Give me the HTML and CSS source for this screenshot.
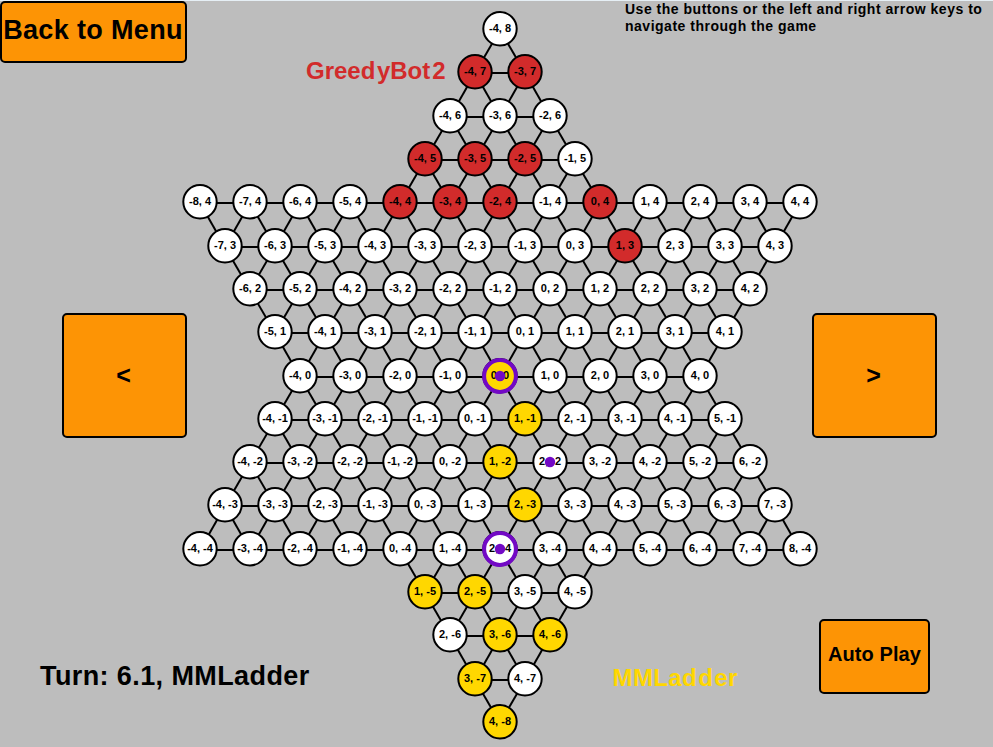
FILE: index.html
```html
<!DOCTYPE html>
<html lang="en">
<head>
<meta charset="utf-8">
<title>Game Replay</title>
<link rel="stylesheet" href="styles.css">
</head>
<body>
<main class="stage">
  <svg class="board" id="board" width="993" height="747" viewBox="0 0 993 747">
    <g id="edges" class="edges"></g>
    <g id="nodes"></g>
    <g id="trail"></g>
    <text class="player player-red" x="306" y="79">Greed<tspan dx="1.5">y</tspan>Bot<tspan dx="2">2</tspan></text>
    <text class="player player-gold" x="612.5" y="686">MMLad<tspan dx="1">d</tspan><tspan dx="1">e</tspan>r</text>
  </svg>
  <section class="side side-left">
    <button class="btn btn-menu">Back to Menu</button>
    <button class="btn btn-step btn-prev">&lt;</button>
    <p class="turn">Turn: 6.1, MMLadder</p>
  </section>
  <section class="side side-right">
    <p class="help">Use the buttons or the left and right arrow keys to<br>navigate through the game</p>
    <button class="btn btn-step btn-next">&gt;</button>
    <button class="btn btn-auto">Auto Play</button>
  </section>
</main>
<script src="board.js"></script>
</body>
</html>
```
FILE: board.js
```js
const NS = 'http://www.w3.org/2000/svg';
const RED = ['-4,7', '-3,7', '-4,5', '-3,5', '-2,5', '-4,4', '-3,4', '-2,4', '0,4', '1,3'];
const GOLD = ['0,0', '1,-1', '1,-2', '2,-3', '1,-5', '2,-5', '3,-6', '4,-6', '3,-7', '4,-8'];
const px = (q, r) => 500 + 50 * q + 25 * r;
const py = r => Math.floor(376 - 43.3 * r + 0.05);

function add(parent, tag, attrs, text) {
  const el = document.createElementNS(NS, tag);
  for (const k in attrs) el.setAttribute(k, attrs[k]);
  if (text) el.textContent = text;
  document.getElementById(parent).appendChild(el);
}

// A cell belongs to the star when it lies in either of its two large triangles.
function inStar(q, r) {
  const s = -q - r;
  return (q >= -4 && r >= -4 && s >= -4) || (q <= 4 && r <= 4 && s <= 4);
}

for (let r = 8; r >= -8; r--) {
  for (let q = -8; q <= 8; q++) {
    if (!inStar(q, r)) continue;
    const x = px(q, r), y = py(r), key = q + ',' + r;
    for (const [dq, dr] of [[1, 0], [0, -1], [1, -1]]) {
      if (inStar(q + dq, r + dr)) {
        add('edges', 'line', { x1: x, y1: y + 1, x2: px(q + dq, r + dr), y2: py(r + dr) + 1 });
      }
    }
    const owner = RED.includes(key) ? 'red' : GOLD.includes(key) ? 'gold' : 'empty';
    add('nodes', 'circle', { class: 'cell ' + owner, cx: x, cy: y - 0.2, r: 16.7 });
    add('nodes', 'text', { class: 'coord', x: x, y: y + 3 }, q + ', ' + r);
  }
}

for (const [q, r] of [[0, 0], [2, -4]]) {
  add('trail', 'circle', { class: 'ring', cx: px(q, r), cy: py(r), r: 15.9 });
}
for (const [q, r] of [[0, 0], [2, -2], [2, -4]]) {
  add('trail', 'circle', { class: 'dot', cx: px(q, r), cy: py(r), r: 5.2 });
}
```
FILE: styles.css
```css
* {
  box-sizing: border-box;
}

body {
  margin: 0;
  font-family: "Liberation Sans", Arial, sans-serif;
  font-weight: bold;
  color: #000;
}

.stage {
  position: relative;
  display: flex;
  justify-content: space-between;
  width: 993px;
  height: 747px;
  overflow: hidden;
  background: #bdbdbd;
  border-top: 1px solid #e6eff5;
}

.board {
  position: absolute;
  left: 0;
  top: -1px;
}

.edges {
  stroke: #000;
  stroke-width: 2;
}

.cell {
  stroke: #000;
  stroke-width: 2;
}

.empty { fill: #fff; }
.red { fill: #d22b2b; }
.gold { fill: #ffd700; }

.coord {
  font-size: 11px;
  text-anchor: middle;
}

.ring {
  fill: none;
  stroke: #7209c5;
  stroke-width: 4;
}

.dot { fill: #7209c5; }

.player { font-size: 24px; }

.player-red { fill: #d22b2b; }

.player-gold {
  fill: #ffd700;
  letter-spacing: 0.4px;
}

.side {
  position: relative;
  display: flex;
  flex-direction: column;
  align-items: flex-start;
}

.side-left { width: 187px; }
.side-right { width: 368px; }

.btn {
  flex: none;
  display: flex;
  align-items: center;
  justify-content: center;
  padding: 0;
  border: 2px solid #000;
  border-radius: 5px;
  background: #fd9405;
  color: #000;
  font-family: inherit;
  font-weight: bold;
  white-space: nowrap;
}

.btn-menu {
  width: 187px;
  height: 62px;
  padding: 0 1px 4px 0;
  font-size: 27px;
  letter-spacing: 0.35px;
}

.btn-step {
  width: 125px;
  height: 125px;
  padding-right: 2px;
  font-size: 25px;
}

.btn-prev {
  margin: 250px 0 0 62px;
}

.turn {
  margin: 222px 0 0 40px;
  font-size: 27px;
  line-height: 32px;
  letter-spacing: 0.4px;
  white-space: nowrap;
}

.help {
  height: 36px;
  margin: 0;
  font-size: 14px;
  line-height: 17px;
  letter-spacing: 0.51px;
  white-space: nowrap;
}

.btn-next {
  margin: 276px 0 0 187px;
}

.btn-auto {
  width: 111px;
  height: 75px;
  margin: 181px 0 0 194px;
  padding-bottom: 5px;
  font-size: 20px;
  letter-spacing: 0.1px;
}
```
